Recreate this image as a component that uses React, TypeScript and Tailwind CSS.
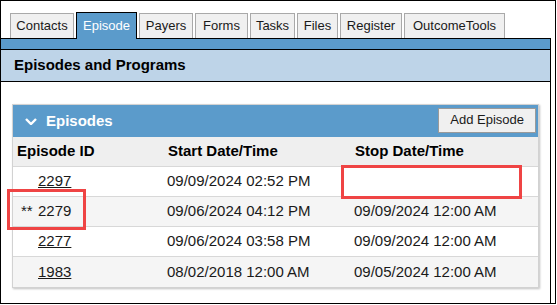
const tabs: [string, string][] = [
  ["Contacts", "w-[64px]"],
  ["Episode", "w-[61px]"],
  ["Payers", "w-[54px]"],
  ["Forms", "w-[53px]"],
  ["Tasks", "w-[45px]"],
  ["Files", "w-[41px]"],
  ["Register", "w-[62px]"],
  ["OutcomeTools", "w-[101px]"],
];

type Row = { id: string; start: string; stop: string; current?: boolean };

const rows: Row[] = [
  { id: "2297", start: "09/09/2024 02:52 PM", stop: "" },
  { id: "2279", start: "09/06/2024 04:12 PM", stop: "09/09/2024 12:00 AM", current: true },
  { id: "2277", start: "09/06/2024 03:58 PM", stop: "09/09/2024 12:00 AM" },
  { id: "1983", start: "08/02/2018 12:00 AM", stop: "09/05/2024 12:00 AM" },
];

export default function App() {
  return (
    <div className="relative flex h-[304px] w-[556px] flex-col overflow-hidden border border-black bg-white font-['Liberation_Sans',Arial,sans-serif] text-[#1a1a1a]">
      {/* tabs */}
      <div className="flex items-end gap-[2px] pl-[9px] pt-[11px] text-[13px]">
        {tabs.map(([t, w]) =>
          t === "Episode" ? (
            <div
              key={t}
              className={
                "relative z-10 -mb-px flex h-[27px] items-center justify-center border border-b-0 border-black bg-[#5b9bcb] pb-[1px] text-white " +
                w
              }
            >
              {t}
            </div>
          ) : (
            <div
              key={t}
              className={
                "flex h-[25px] items-center justify-center border border-b-0 border-[#a9a9a9] bg-[#f0f0f0] " + w
              }
            >
              {t}
            </div>
          ),
        )}
      </div>

      <div className="mr-[4px] flex-1 border-r border-black">
        <div className="h-[11px] border-t border-black bg-[#5b9bcb]" />
        <div className="flex h-[33px] items-center border-y border-black bg-[#bed4e8] pl-[13px] text-[15px] font-bold text-black">
          Episodes and Programs
        </div>

        <div className="px-[11px] pt-[22px]">
          <div className="border border-[#d2d2d2] shadow-[1px_1px_2px_rgba(0,0,0,0.25)]">
            <div className="flex h-[32px] items-center justify-between bg-[#5b9bcb] pl-[12px] pr-[2px]">
              <div className="flex items-center gap-[9px] text-[15px] font-bold text-white">
                <svg width="12" height="7" viewBox="0 0 12 7" className="mt-[1px]">
                  <polyline points="1,1 6,6 11,1" fill="none" stroke="white" strokeWidth="2.4" />
                </svg>
                Episodes
              </div>
              <button className="mb-[2px] h-[25px] border border-[#9a9a9a] bg-[#f0f0f0] px-[11px] text-[13px] text-[#1a1a1a]">
                Add Episode
              </button>
            </div>

            <div className="grid h-[30px] grid-cols-[155px_187px_1fr] items-center border-b border-[#d8d8d8] bg-[#efefef] text-[15px] font-bold text-black">
              <div className="pl-[4px]">Episode ID</div>
              <div>Start Date/Time</div>
              <div>Stop Date/Time</div>
            </div>

            {rows.map((r, i) => (
              <div
                key={r.id}
                className={
                  "grid h-[30px] grid-cols-[155px_187px_1fr] items-center text-[15px] " +
                  (i % 2 === 1 ? "bg-[#f5f5f5] " : "bg-white ") +
                  (i < rows.length - 1 ? "border-b border-[#d8d8d8]" : "")
                }
              >
                <div className="pl-[8px]">
                  <span className="inline-block w-[17px]">{r.current ? "**" : ""}</span>
                  {r.current ? <span>{r.id}</span> : <a className="cursor-pointer underline">{r.id}</a>}
                </div>
                <div className="-ml-px">{r.start}</div>
                <div className="-ml-px">{r.stop}</div>
              </div>
            ))}
          </div>
        </div>
      </div>

      {/* annotation boxes */}
      <div className="absolute left-[340px] top-[164px] h-[34px] w-[181px] border-[3px] border-[#ef4444]" />
      <div className="absolute left-[6px] top-[188px] h-[41px] w-[79px] border-[3px] border-[#ef4444]" />
    </div>
  );
}
